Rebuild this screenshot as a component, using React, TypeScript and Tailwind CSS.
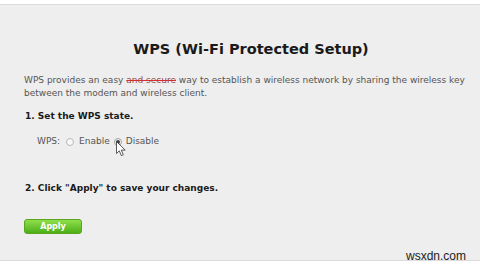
export default function App() {
  return (
    <div className="w-[480px] h-[265px] bg-white pt-[4px] font-['DejaVu_Sans',sans-serif] overflow-hidden relative">
      <div className="h-[257px] bg-[#eeeeee] border-t border-b border-[#dcdcdc] flex flex-col">
        <h1 className="mt-[35px] pl-[22px] text-center text-[14.5px] font-bold text-[#1a1a1a] leading-[18px]">
          WPS (Wi-Fi Protected Setup)
        </h1>

        <div className="mt-[16px] pl-[24px] pr-[6px] text-[9px] leading-[13px] text-[#555555] flex flex-col">
          <div className="flex whitespace-pre">
            <span>WPS provides an easy </span>
            <span className="text-[#9a4a4a] line-through decoration-[#d03030]">and secure</span>
            <span> way to establish a wireless network by sharing the wireless key</span>
          </div>
          <span>between the modem and wireless client.</span>
        </div>

        {/* 1. 状態 */}
        <div className="mt-[10px] px-[25px] text-[9px] font-bold text-[#1a1a1a] leading-[13px]">
          1. Set the WPS state.
        </div>
        <div className="mt-[12px] pl-[37px] flex items-center text-[9px] text-[#555555] leading-[13px]">
          <span>WPS:</span>
          <span className="ml-[6px] w-[8px] h-[8px] rounded-full border border-[#b8b8b8] bg-[#f8f8f8]" />
          <span className="ml-[5px]">Enable</span>
          <span className="ml-[4px] w-[8px] h-[8px] rounded-full border border-[#a0a0a0] bg-[#f4f4f4] flex items-center justify-center relative">
            <span className="w-[4px] h-[4px] rounded-full bg-[#444444]" />
            <svg
              className="absolute left-[1px] top-[2px]"
              width="11"
              height="17"
              viewBox="0 0 11 17"
            >
              <path
                d="M0.5 0.5 L0.5 12.5 L3.3 9.8 L5.3 14.6 L7.3 13.8 L5.3 9.1 L9.2 9.1 Z"
                fill="#ffffff"
                stroke="#333333"
                strokeWidth="0.8"
                strokeLinejoin="round"
              />
            </svg>
          </span>
          <span className="ml-[4px]">Disable</span>
        </div>

        {/* 2. 保存 */}
        <div className="mt-[34px] px-[25px] text-[9px] font-bold text-[#1a1a1a] leading-[13px]">
          2. Click "Apply" to save your changes.
        </div>
        <div className="mt-[17px] px-[24px]">
          <button className="w-[58px] h-[15px] rounded-[3px] border border-[#5aa51e] bg-gradient-to-b from-[#8fe04a] to-[#4cae16] text-white text-[8px] font-bold leading-[13px]">
            Apply
          </button>
        </div>
      </div>
      <span className="absolute left-[406px] top-[249px] text-[12px] text-[#222222] font-['Liberation_Sans',sans-serif] leading-[14px]">
        wsxdn.com
      </span>
    </div>
  );
}
